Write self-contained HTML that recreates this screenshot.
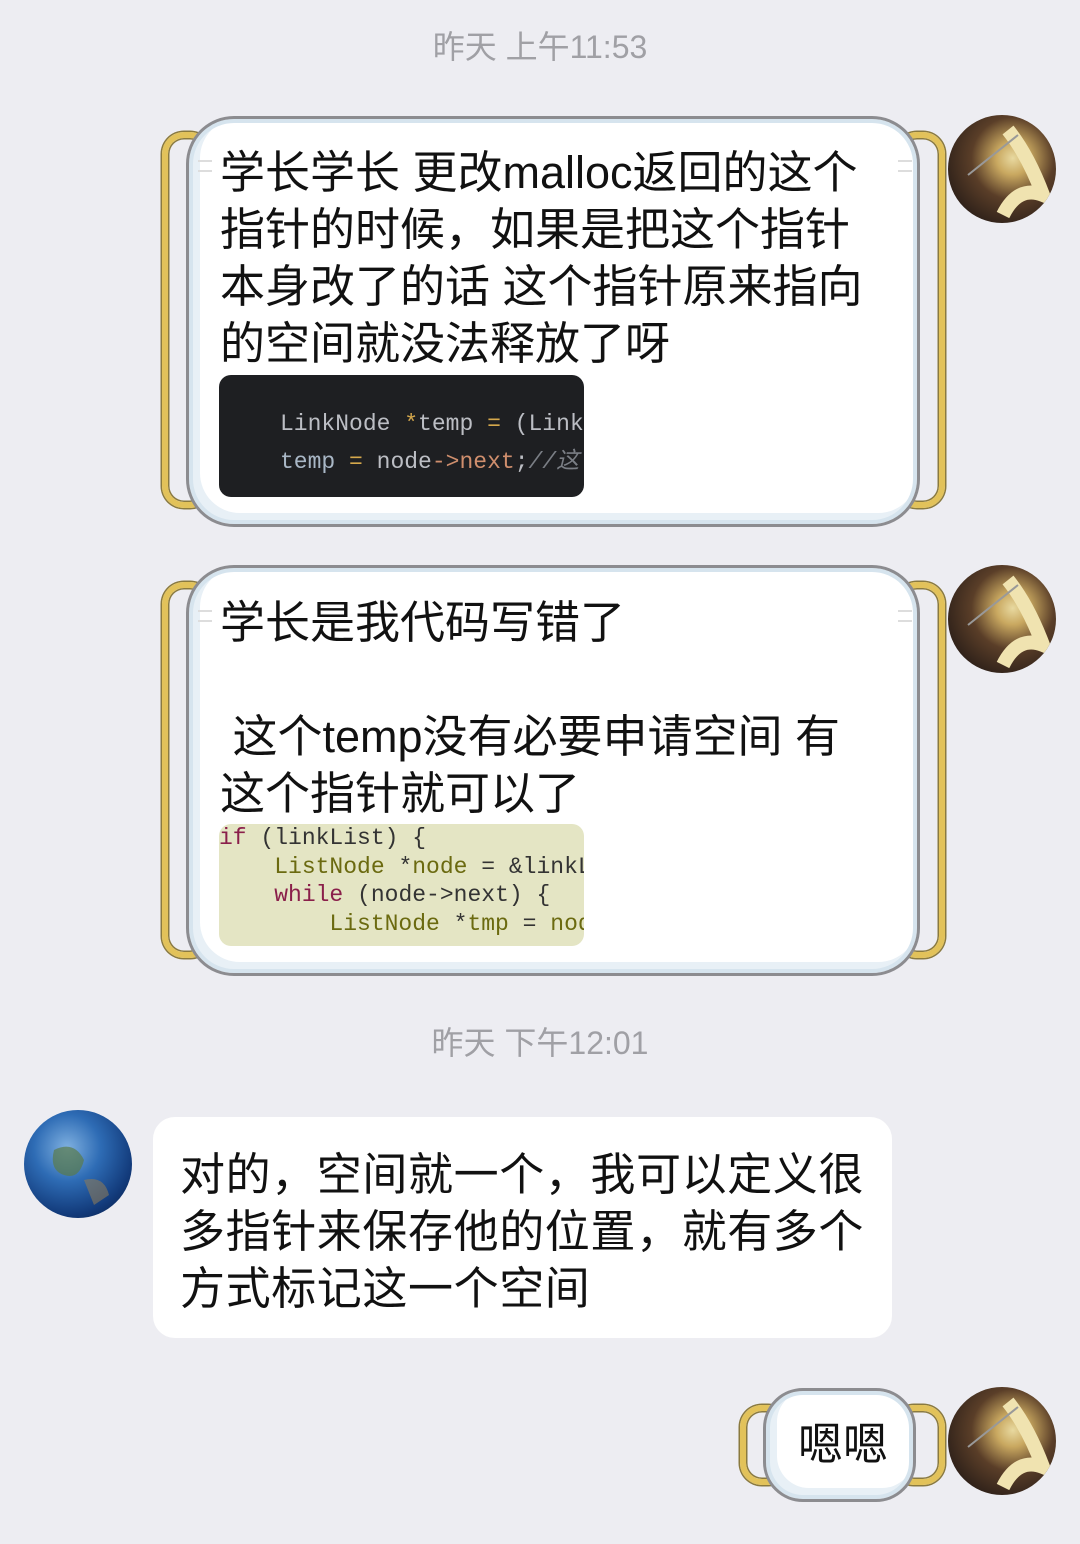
<!DOCTYPE html>
<html><head><meta charset="utf-8"><style>
*{margin:0;padding:0;box-sizing:border-box}
body{width:1080px;height:1544px;background:#ededf2;position:relative;overflow:hidden;font-family:"Liberation Sans","Noto Sans CJK SC",sans-serif}
.ts{position:absolute;left:0;width:1080px;text-align:center;color:#a0a0a5;font-size:32px}
.loop{position:absolute;border:6px solid #e2c25a;box-shadow:0 0 0 1.5px #8a7a40,inset 0 0 0 1.5px #8a7a40;border-radius:22px}
.bub{position:absolute;background:#fff;border:3px solid #8c8c90;border-radius:48px;box-shadow:inset 0 0 0 4px #d6e4ee,inset 6px -6px 0 5px #e8f0f6}
.txt{position:absolute;font-size:45px;line-height:57px;color:#111;white-space:pre}
.av{position:absolute;width:108px;height:108px;border-radius:50%;overflow:hidden;background:radial-gradient(circle at 60% 40%,#e8d9a0 0,#c9a860 18%,#5a3e28 45%,#2a1e18 80%)}
.code{position:absolute;overflow:hidden;font-family:"Liberation Mono",monospace;white-space:pre}
.dash{position:absolute;width:14px;height:2px;background:#ddd}
</style></head><body>
<div class="ts" style="top:22px">昨天 上午11:53</div>

<div class="loop" style="left:162px;top:132px;width:50px;height:376px"></div>
<div class="loop" style="left:895px;top:132px;width:50px;height:376px"></div>
<div class="bub" style="left:186px;top:116px;width:734px;height:411px"></div>
<div class="dash" style="left:198px;top:160px"></div><div class="dash" style="left:198px;top:170px"></div>
<div class="dash" style="left:898px;top:160px"></div><div class="dash" style="left:898px;top:170px"></div>
<div class="txt" style="left:220px;top:144px">学长学长 更改malloc返回的这个
指针的时候，如果是把这个指针
本身改了的话 这个指针原来指向
的空间就没法释放了呀</div>
<div class="code" style="left:219px;top:375px;width:365px;height:122px;background:#1e1f22;border-radius:12px;font-size:23px;line-height:38px;padding:30px 0 0 61px;color:#bcbec4">LinkNode <span style="color:#d5a84c">*</span>temp <span style="color:#d5a84c">=</span> (Link
<span style="color:#a9b7c6">temp</span> <span style="color:#d5a84c">=</span> node<span style="color:#cf8e6d">-&gt;next</span>;<span style="color:#7a7e85;font-style:italic">//这</span></div>
<div class="av" style="left:948px;top:115px"><svg width="108" height="108"><path d="M60 15 Q80 40 95 80 Q70 70 55 100" stroke="#f0e3b0" stroke-width="14" fill="none"/><path d="M20 60 L70 20" stroke="#999" stroke-width="2"/></svg></div>

<div class="loop" style="left:162px;top:582px;width:50px;height:376px"></div>
<div class="loop" style="left:895px;top:582px;width:50px;height:376px"></div>
<div class="bub" style="left:186px;top:565px;width:734px;height:411px"></div>
<div class="dash" style="left:198px;top:610px"></div><div class="dash" style="left:198px;top:620px"></div>
<div class="dash" style="left:898px;top:610px"></div><div class="dash" style="left:898px;top:620px"></div>
<div class="txt" style="left:220px;top:594px">学长是我代码写错了

 这个temp没有必要申请空间 有
这个指针就可以了</div>
<div class="code" style="left:219px;top:824px;width:365px;height:122px;background:#e4e5c4;border-radius:12px;font-size:23px;line-height:28.5px;padding:0;color:#6b6a10"><span style="color:#8a1f4a">if</span> <span style="color:#333">(linkList) {</span>
    ListNode <span style="color:#333">*</span>node <span style="color:#333">= &amp;linkL</span>
    <span style="color:#8a1f4a">while</span> <span style="color:#333">(node-&gt;next) {</span>
        ListNode <span style="color:#333">*</span>tmp <span style="color:#333">=</span> nod</div>
<div class="av" style="left:948px;top:565px"><svg width="108" height="108"><path d="M60 15 Q80 40 95 80 Q70 70 55 100" stroke="#f0e3b0" stroke-width="14" fill="none"/><path d="M20 60 L70 20" stroke="#999" stroke-width="2"/></svg></div>

<div class="ts" style="top:1018px">昨天 下午12:01</div>

<div style="position:absolute;left:24px;top:1110px;width:108px;height:108px;border-radius:50%;background:radial-gradient(circle at 40% 35%,#7fb0e0 0,#2e6cb5 35%,#123a7a 70%,#08183a 100%);overflow:hidden"><svg width="108" height="108"><path d="M30 40 Q50 30 60 50 Q55 70 40 65 Q25 60 30 40Z" fill="#5a7a4a" opacity=".7"/><path d="M60 70 Q80 65 85 85 L70 95Z" fill="#8a7a5a" opacity=".6"/></svg></div>
<div style="position:absolute;left:153px;top:1117px;width:739px;height:221px;background:#fff;border-radius:22px"></div>
<div class="txt" style="left:180px;top:1146px;letter-spacing:0.6px">对的，空间就一个，我可以定义很
多指针来保存他的位置，就有多个
方式标记这一个空间</div>

<div class="loop" style="left:740px;top:1405px;width:50px;height:80px"></div>
<div class="loop" style="left:892px;top:1405px;width:53px;height:80px"></div>
<div class="bub" style="left:763px;top:1388px;width:153px;height:114px;border-radius:40px"></div>
<div class="txt" style="left:798px;top:1416px">嗯嗯</div>
<div class="av" style="left:948px;top:1387px"><svg width="108" height="108"><path d="M60 15 Q80 40 95 80 Q70 70 55 100" stroke="#f0e3b0" stroke-width="14" fill="none"/><path d="M20 60 L70 20" stroke="#999" stroke-width="2"/></svg></div>
</body></html>
